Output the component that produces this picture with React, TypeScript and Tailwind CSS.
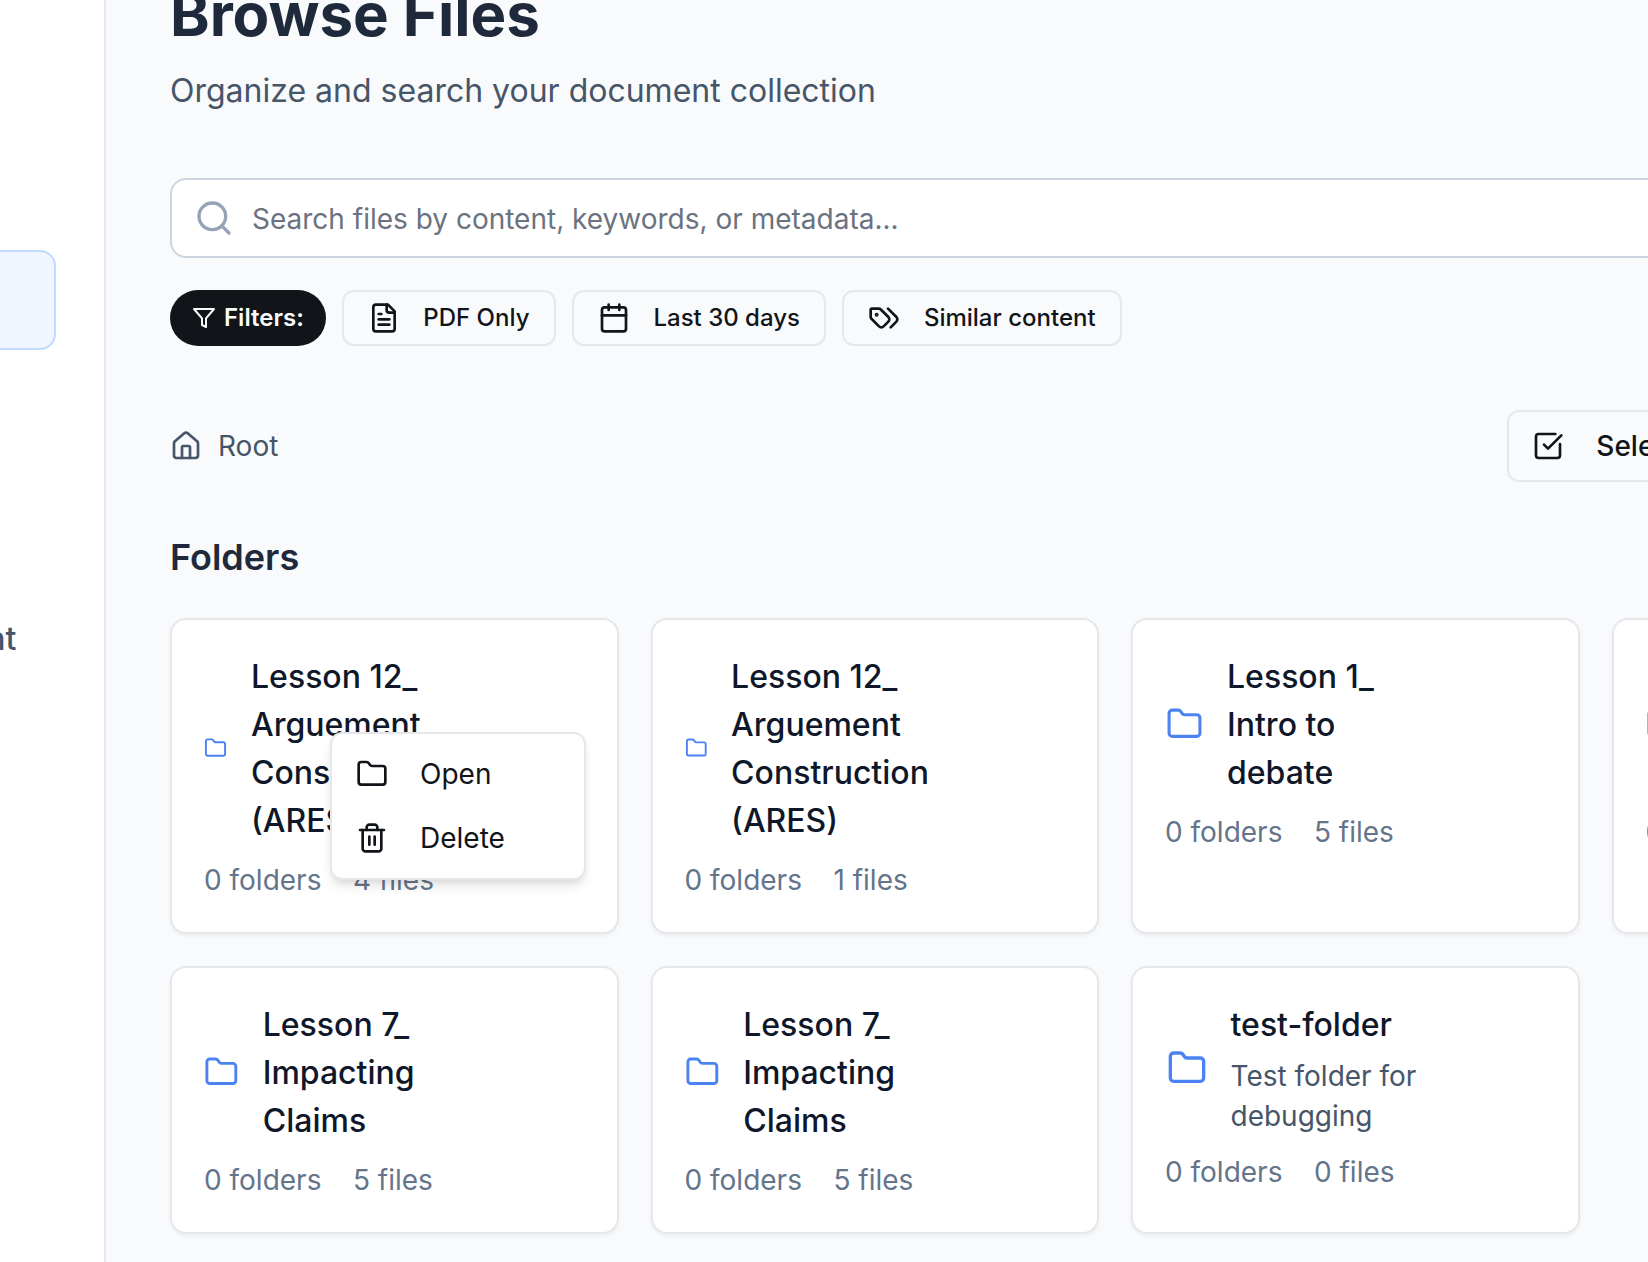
import React from "react";

type IconProps = { className?: string; children: React.ReactNode };

function Icon({ className = "", children }: IconProps) {
  return (
    <svg
      viewBox="0 0 24 24"
      fill="none"
      stroke="currentColor"
      strokeWidth={2}
      strokeLinecap="round"
      strokeLinejoin="round"
      className={`shrink-0 ${className}`}
    >
      {children}
    </svg>
  );
}

function FolderIcon({ className }: { className?: string }) {
  return (
    <Icon className={className}>
      <path d="M20 20a2 2 0 0 0 2-2V8a2 2 0 0 0-2-2h-7.9a2 2 0 0 1-1.69-.9L9.6 3.9A2 2 0 0 0 7.93 3H4a2 2 0 0 0-2 2v13a2 2 0 0 0 2 2Z" />
    </Icon>
  );
}

function FilterChip({ icon, label }: { icon: React.ReactNode; label: string }) {
  return (
    <button className="flex h-14 items-center gap-[23.5px] rounded-[12px] border-2 border-[#e5e7eb] pl-6 pr-[24.5px] text-2xl font-medium text-[#111418]">
      <Icon className="size-8">{icon}</Icon>
      <span>{label}</span>
    </button>
  );
}

type Folder = {
  lines: string[];
  note?: string[];
  files: number;
  icon: string;
  menu?: boolean;
};

const folders: Folder[] = [
  { lines: ["Lesson 12_", "Arguement", "Construction", "(ARES)"], files: 4, icon: "w-[23px]", menu: true },
  { lines: ["Lesson 12_", "Arguement", "Construction", "(ARES)"], files: 1, icon: "w-[22.6px]" },
  { lines: ["Lesson 1_", "Intro to", "debate"], files: 5, icon: "ml-px w-[37px]" },
  { lines: ["Lesson 4_", "Refuting", "Claims"], files: 5, icon: "w-[34px]" },
  { lines: ["Lesson 7_", "Impacting", "Claims"], files: 5, icon: "w-[34.7px]" },
  { lines: ["Lesson 7_", "Impacting", "Claims"], files: 5, icon: "w-[34.7px]" },
  { lines: ["test-folder"], note: ["Test folder for", "debugging"], files: 0, icon: "ml-[1.5px] w-[40px]" },
];

const folderIconClass = "h-10 text-[#4b83f2]";

function ContextMenu() {
  return (
    <div className="absolute left-[158px] top-[112px] z-10 w-64 rounded-[12px] border-2 border-[#e5e7eb] bg-white p-2 text-[28px] leading-10 text-[#111418] shadow-[0_8px_12px_-2px_rgba(0,0,0,0.1),0_4px_8px_-4px_rgba(0,0,0,0.1)]">
      <div className="flex h-16 items-center gap-8 px-4">
        <FolderIcon className="size-8" />
        <span>Open</span>
      </div>
      <div className="flex h-16 items-center gap-8 px-4">
        <Icon className="size-8">
          <path d="M3 6h18" />
          <path d="M19 6v14c0 1-1 2-2 2H7c-1 0-2-1-2-2V6" />
          <path d="M8 6V4c0-1 1-2 2-2h4c1 0 2 1 2 2v2" />
          <path d="M10 11v6" />
          <path d="M14 11v6" />
        </Icon>
        <span>Delete</span>
      </div>
    </div>
  );
}

function FolderCard({ folder }: { folder: Folder }) {
  return (
    <div className="relative rounded-[16px] border-2 border-[#e5e7eb] bg-white p-8 shadow-[0_2px_4px_0_rgba(0,0,0,0.05)]">
      <div className="mb-4 flex items-center gap-6">
        <FolderIcon className={`${folderIconClass} ${folder.icon}`} />
        <div>
          <h3 className="-mb-px pt-px text-[32px] font-medium leading-[48px] text-[#0f172a]">
            {folder.lines.map((line) => (
              <span key={line} className="block whitespace-nowrap">
                {line}
              </span>
            ))}
          </h3>
          {folder.note && (
            <p className="mt-2 text-[28px] leading-10 text-[#475569]">
              {folder.note.map((line) => (
                <span key={line} className="block whitespace-nowrap">
                  {line}
                </span>
              ))}
            </p>
          )}
        </div>
      </div>
      <div className="flex gap-[31.5px] text-[28px] leading-10 text-[#64748b]">
        <span>0 folders</span>
        <span>{folder.files} files</span>
      </div>
      {folder.menu && <ContextMenu />}
    </div>
  );
}

export default function App() {
  return (
    <div className="flex h-[1262px] w-[1648px] overflow-hidden bg-[#f8fafc] font-['Inter',sans-serif]">
      <aside className="flex w-[106px] shrink-0 flex-col overflow-hidden border-r-2 border-[#e2e8f0] bg-white pt-[250px]">
        <div className="-ml-6 mr-12 h-[100px] rounded-[16px] border-2 border-[#bfdbfe] bg-[#eff6ff]" />
        <div className="mt-[265px] flex w-[16.5px] justify-end text-[32px] font-medium leading-[48px] text-[#475569]">
          <span>nt</span>
        </div>
      </aside>

      <main className="min-w-0 flex-1 overflow-hidden pl-16">
        <div className="-mt-[22px] w-[1890px]">
          <h1 className="text-6xl font-bold leading-[72px] tracking-[-0.05px] text-[#1e293b]">Browse Files</h1>
          <p className="-mb-px mt-[17px] text-[32px] leading-[48px] text-[#475569]">
            Organize and search your document collection
          </p>

          <div className="mt-16 flex h-20 items-center gap-[18px] rounded-[16px] border-2 border-[#cbd5e1] bg-white px-[22px] text-[28px] leading-10 text-[#6b7280]">
            <Icon className="size-10 text-[#94a3b8]">
              <circle cx="11" cy="11" r="8" />
              <path d="m21 21-4.3-4.3" />
            </Icon>
            <span className="pt-0.5">Search files by content, keywords, or metadata...</span>
          </div>

          <div className="mt-8 flex items-center gap-4">
            <div className="flex h-14 items-center gap-2 rounded-full bg-[#111418] px-[22px] text-2xl font-semibold text-[#fafafa]">
              <Icon className="size-6">
                <path d="M22 3H2l8 9.46V19l4 2v-8.54L22 3z" />
              </Icon>
              <span>Filters:</span>
            </div>
            <FilterChip
              label="PDF Only"
              icon={
                <>
                  <path d="M15 2H6a2 2 0 0 0-2 2v16a2 2 0 0 0 2 2h12a2 2 0 0 0 2-2V7Z" />
                  <path d="M14 2v4a2 2 0 0 0 2 2h4" />
                  <path d="M10 9H8" />
                  <path d="M16 13H8" />
                  <path d="M16 17H8" />
                </>
              }
            />
            <FilterChip
              label="Last 30 days"
              icon={
                <>
                  <path d="M8 2v4" />
                  <path d="M16 2v4" />
                  <rect width="18" height="18" x="3" y="4" rx="2" />
                  <path d="M3 10h18" />
                </>
              }
            />
            <FilterChip
              label="Similar content"
              icon={
                <>
                  <path d="m15 5 6.3 6.3a2.4 2.4 0 0 1 0 3.4L17 19" />
                  <path d="M9.586 5.586A2 2 0 0 0 8.172 5H3a1 1 0 0 0-1 1v5.172a2 2 0 0 0 .586 1.414L8.29 18.29a2.426 2.426 0 0 0 3.42 0l3.58-3.58a2.426 2.426 0 0 0 0-3.42z" />
                  <circle cx="6.5" cy="9.5" r=".5" fill="currentColor" />
                </>
              }
            />
          </div>

          <div className="mt-16 flex items-center">
            <div className="flex w-[1337px] items-center gap-4 text-[28px] leading-10 text-[#475569]">
              <Icon className="size-8">
                <path d="M15 21v-8a1 1 0 0 0-1-1h-4a1 1 0 0 0-1 1v8" />
                <path d="M3 10a2 2 0 0 1 .709-1.528l7-5.999a2 2 0 0 1 2.582 0l7 5.999A2 2 0 0 1 21 10v9a2 2 0 0 1-2 2H5a2 2 0 0 1-2-2z" />
              </Icon>
              <span>Root</span>
            </div>
            <button className="flex h-[72px] items-center gap-8 rounded-[12px] border-2 border-[#e5e7eb] pl-[23.3px] pr-6 text-[28px] font-medium leading-10 text-[#111418]">
              <Icon className="size-8">
                <path d="M21 10.5V19a2 2 0 0 1-2 2H5a2 2 0 0 1-2-2V5a2 2 0 0 1 2-2h12.5" />
                <path d="m9 11 3 3L22 4" />
              </Icon>
              <span>Select</span>
            </button>
          </div>

          <h2 className="mb-[33px] mt-[47px] text-4xl font-semibold leading-[56px] text-[#1e293b]">Folders</h2>

          <div className="grid grid-cols-4 gap-8">
            {folders.map((folder, index) => (
              <FolderCard key={index} folder={folder} />
            ))}
          </div>
        </div>
      </main>
    </div>
  );
}
